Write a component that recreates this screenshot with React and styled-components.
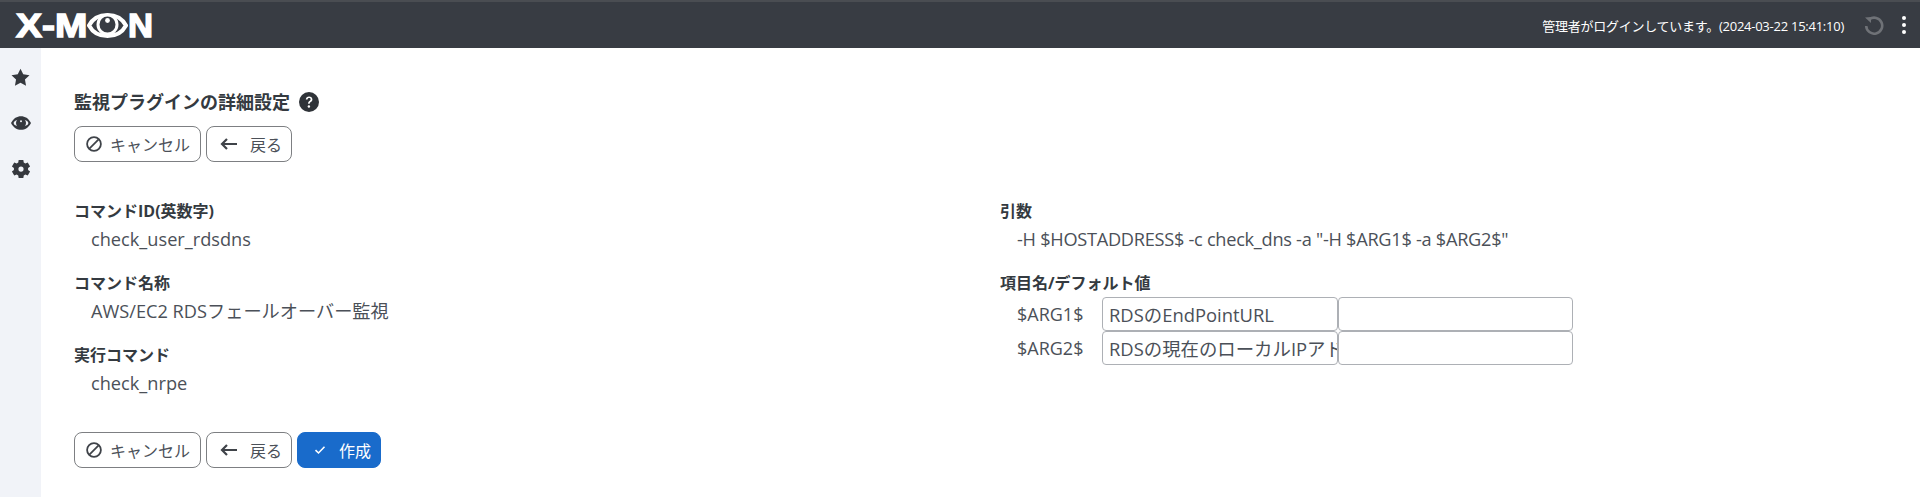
import React from 'react';
import styled, { createGlobalStyle } from 'styled-components';

const Global = createGlobalStyle`
  html, body { margin: 0; padding: 0; background: #fff; }
  body { font-family: "Open Sans", "Noto Sans CJK JP", sans-serif; font-size: 16px; color: #3a3f47; }
`;
const Page = styled.div`
  width: 1920px; height: 497px; display: flex; flex-direction: column; overflow: hidden;
`;
const Header = styled.header`
  height: 48px; flex: none; box-sizing: border-box; background: #383c43; border-top: 2px solid #4a4d52;
  display: flex; align-items: center; justify-content: space-between; padding: 0 13px 0 16px;
`;
const Logo = styled.div`
  display: flex; align-items: center; color: #fff; font-family: "Liberation Sans", sans-serif;
  font-weight: 700; font-size: 33px; line-height: 1; height: 28px;
  -webkit-text-stroke: 1.4px #fff;
`;
const LogoPart = styled.span`
  display: block; width: ${p => p.$w}px; flex: none; transform: scaleX(${p => p.$sx}); transform-origin: left center;
`;
const HeaderRight = styled.div`
  display: flex; align-items: center;
`;
const LoginText = styled.span`
  color: #fff; font-size: 13px; letter-spacing: -0.25px; margin-right: 20px;
`;
const Body = styled.div`
  flex: 1; display: flex; min-height: 0;
`;
const Side = styled.nav`
  width: 41px; flex: none; background: #f1f3f8; display: flex; flex-direction: column; align-items: center;
  padding-top: 19px; gap: 26px; box-sizing: border-box;
`;
const SideIcon = styled.div`
  width: 20px; height: 20px; display: flex; align-items: center; justify-content: center; color: #35383e;
`;
const Main = styled.main`
  flex: 1; padding: 42px 33px 0; box-sizing: border-box;
`;
const TitleRow = styled.div`
  display: flex; align-items: center; height: 24px; gap: 9px; margin-bottom: 12px;
`;
const Title = styled.h1`
  margin: 0; font-size: 18px; font-weight: 700; color: #343a40; line-height: 24px;
`;
const Toolbar = styled.div`
  display: flex; gap: 5px; height: 36px;
`;
const Btn = styled.button`
  box-sizing: border-box; height: 36px; padding: 0 0 0 ${p => p.$pl}px; display: flex; align-items: center;
  font-family: inherit; font-size: 16px; border-radius: 8px;
  width: ${p => p.$w}px; white-space: nowrap;
  background: ${p => (p.$primary ? '#196bcb' : '#fff')};
  color: ${p => (p.$primary ? '#fff' : '#4b5058')};
  border: ${p => (p.$primary ? '1px solid #196bcb' : '1px solid #7d7f82')};
`;
const BtnIcon = styled.span`
  display: flex; width: 18px; justify-content: center; margin-right: ${p => p.$gap}px; flex: none;
`;
const Columns = styled.div`
  display: grid; grid-template-columns: 926px 1fr; margin-top: 37px; height: 233px;
`;
const Field = styled.div`
  margin-bottom: 19px;
`;
const Label = styled.div`
  font-size: 16px; font-weight: 700; color: #343a40; line-height: 24px; height: 27px;
`;
const Value = styled.div`
  font-size: 18.2px; color: #4b5058; line-height: 26px; padding-left: 17px; height: 26px; white-space: nowrap;
  letter-spacing: ${p => (p.$tight ? '-0.28px' : '0')};
`;
const ArgRow = styled.div`
  display: flex; align-items: center; height: 34px; margin-top: ${p => (p.$first ? -1 : 0)}px;
`;
const ArgName = styled.div`
  width: 102px; padding-left: 17px; box-sizing: border-box; font-size: 18px; color: #4b5058; flex: none;
`;
const Input = styled.input`
  box-sizing: border-box; width: ${p => p.$w}px; height: 34px; border: 1px solid #adb0b5; border-radius: 4px;
  font-family: inherit; font-size: 18.4px; color: #4b5058; padding: 0 0 0 6px; background: #fff; outline: none; flex: none;
`;

const Ban = () => (
  <svg width="16" height="16" viewBox="0 0 16 16" fill="none" stroke="#3f4349" strokeWidth="1.8">
    <circle cx="8" cy="8" r="6.9" /><line x1="3.4" y1="12.6" x2="12.6" y2="3.4" />
  </svg>
);
const Back = () => (
  <svg width="18" height="12" viewBox="0 0 18 12" fill="none" stroke="#3f4349" strokeWidth="2.2">
    <path d="M17 6H2M7 1 2 6l5 5" />
  </svg>
);
const Check = () => (
  <svg width="12" height="10" viewBox="0 0 12 10" fill="none" stroke="#fff" strokeWidth="1.6">
    <path d="M1.5 5.2 4.5 8 10.5 1.8" />
  </svg>
);
const Buttons = ({ create }) => (
  <Toolbar>
    <Btn $w={127} $pl={10}><BtnIcon $gap={7}><Ban /></BtnIcon>キャンセル</Btn>
    <Btn $w={86} $pl={13}><BtnIcon $gap={12}><Back /></BtnIcon>戻る</Btn>
    {create && <Btn $primary $w={84} $pl={13}><BtnIcon $gap={10}><Check /></BtnIcon>作成</Btn>}
  </Toolbar>
);

export default function App() {
  return (
    <Page>
      <Global />
      <Header>
        <Logo>
          <LogoPart $w={71} $sx={1.18}>X-M</LogoPart>
          <svg width="41" height="25" viewBox="0 0 41 25">
            <path d="M2 12.5C6 5 13 2 20.500 2S35 5 39 12.500C35 20 28 23 20.500 23S6 20 2 12.500z" fill="#383c43" stroke="#fff" strokeWidth="4" />
            <circle cx="20.500" cy="11.500" r="9.500" fill="#383c43" stroke="#fff" strokeWidth="3" />
            <circle cx="20.500" cy="7.500" r="2.400" fill="#fff" />
          </svg>
          <LogoPart $w={25} $sx={1.05}>N</LogoPart>
        </Logo>
        <HeaderRight>
          <LoginText>管理者がログインしています。(2024-03-22 15:41:10)</LoginText>
          <svg width="20" height="20" viewBox="0 0 20 20" fill="none" stroke="#6f7277" strokeWidth="2.6" style={{ marginRight: 17 }}>
            <path d="M5.5 4.2A8 8 0 1 1 2.2 11" />
            <path d="M1 2.500 7 2v6z" fill="#6f7277" stroke="none" />
          </svg>
          <svg width="6" height="20" viewBox="0 0 6 20" fill="#fff">
            <circle cx="3" cy="3" r="2" /><circle cx="3" cy="10" r="2" /><circle cx="3" cy="17" r="2" />
          </svg>
        </HeaderRight>
      </Header>
      <Body>
        <Side>
          <SideIcon>
            <svg width="19" height="18" viewBox="0 0 24 23" fill="currentColor"><path d="M12 .8l3.500 7.300 8 1.100-5.800 5.600 1.400 8L12 18.900l-7.100 3.900 1.400-8L.5 9.200l8-1.100z" /></svg>
          </SideIcon>
          <SideIcon>
            <svg width="20" height="14" viewBox="0 0 20 14">
              <path d="M0 7C2.500 2.200 6 .2 10 .2S17.500 2.200 20 7c-2.500 4.800-6 6.800-10 6.800S2.500 11.800 0 7z" fill="currentColor" />
              <ellipse cx="10" cy="7" rx="7.400" ry="3.600" fill="#f1f3f8" />
              <circle cx="10" cy="7" r="5" fill="currentColor" />
              <circle cx="10" cy="5.200" r="1" fill="#f1f3f8" />
            </svg>
          </SideIcon>
          <SideIcon>
            <svg width="21" height="21" viewBox="0 0 24 24" fill="currentColor"><path fillRule="evenodd" d="M14.800 0.600l.5 3 1.900 1.100 2.900-1.100 2.800 4.800-2.400 1.900 0 2.200 2.400 1.900-2.800 4.800-2.900-1.100-1.900 1.100-.5 3H9.200l-.5-3-1.900-1.100-2.900 1.100-2.800-4.800 2.400-1.900V10.300L1.100 8.400l2.800-4.800 2.900 1.100 1.900-1.100.5-3zM12 8.400a3 3 0 1 0 0 6.200 3 3 0 0 0 0-6.200z" /></svg>
          </SideIcon>
        </Side>
        <Main>
          <TitleRow>
            <Title>監視プラグインの詳細設定</Title>
            <svg width="20" height="20" viewBox="0 0 20 20">
              <circle cx="10" cy="10" r="10" fill="#2f3338" />
              <path d="M6.800 7.600C6.900 5.600 8.300 4.600 10.100 4.600c1.900 0 3.300 1.100 3.300 2.800 0 2.400-2.700 2.300-2.700 4.300H9.100c0-2.900 2.500-2.900 2.500-4.300 0-.8-.6-1.300-1.500-1.300-1 0-1.500.6-1.600 1.500z" fill="#fff" />
              <circle cx="9.900" cy="14.500" r="1.200" fill="#fff" />
            </svg>
          </TitleRow>
          <Buttons />
          <Columns>
            <div>
              <Field><Label>コマンドID(英数字)</Label><Value>check_user_rdsdns</Value></Field>
              <Field><Label>コマンド名称</Label><Value>AWS/EC2 RDSフェールオーバー監視</Value></Field>
              <Field><Label>実行コマンド</Label><Value>check_nrpe</Value></Field>
            </div>
            <div>
              <Field><Label>引数</Label><Value $tight>-H $HOSTADDRESS$ -c check_dns -a "-H $ARG1$ -a $ARG2$"</Value></Field>
              <Field>
                <Label>項目名/デフォルト値</Label>
                <ArgRow $first><ArgName>$ARG1$</ArgName><Input $w={236} readOnly value="RDSのEndPointURL" /><Input $w={235} readOnly value="" /></ArgRow>
                <ArgRow><ArgName>$ARG2$</ArgName><Input $w={236} readOnly value="RDSの現在のローカルIPアドレス" /><Input $w={235} readOnly value="" /></ArgRow>
              </Field>
            </div>
          </Columns>
          <Buttons create />
        </Main>
      </Body>
    </Page>
  );
}
